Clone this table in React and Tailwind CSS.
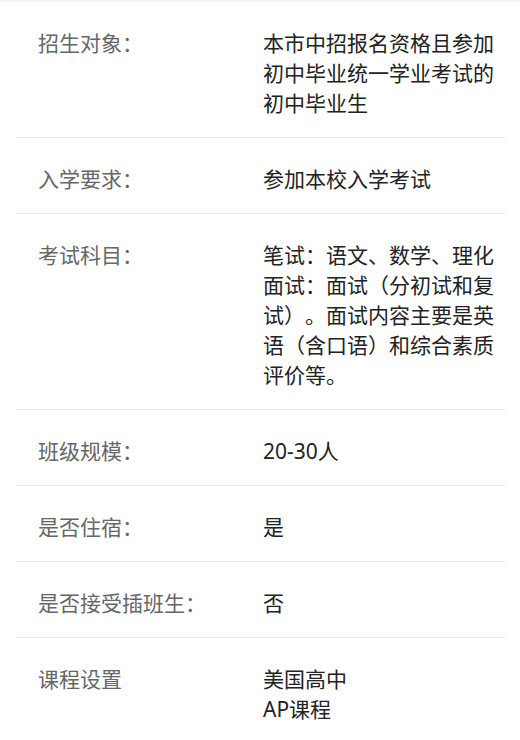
const rows = [
  { label: "招生对象：", value: ["本市中招报名资格且参加初中毕业统一学业考试的初中毕业生"] },
  { label: "入学要求：", value: ["参加本校入学考试"] },
  {
    label: "考试科目：",
    value: ["笔试：语文、数学、理化", "面试：面试（分初试和复试）。面试内容主要是英语（含口语）和综合素质评价等。"],
  },
  { label: "班级规模：", value: ["20-30人"] },
  { label: "是否住宿：", value: ["是"] },
  { label: "是否接受插班生：", value: ["否"] },
  { label: "课程设置", value: ["美国高中", "AP课程"] },
];

export default function App() {
  return (
    <div className="min-h-[740px] bg-white font-['Noto_Sans','Noto_Sans_CJK_SC',sans-serif] text-[21px] leading-[30px] [text-spacing-trim:space-all]">
      <div className="h-[2px] bg-[#f4f4f4]" />
      <div className="ml-4 mr-[14px]">
        {rows.map((row, i) => (
          <div
            key={row.label}
            className={`flex pt-[26px] pb-[19px] ${i < rows.length - 1 ? "border-b border-[#ececec]" : ""}`}
          >
            <div className="w-[247px] shrink-0 pl-[22px] text-[#666]">{row.label}</div>
            <div className="min-w-0 flex-1 text-[#222]">
              {row.value.map((line) => (
                <p key={line}>{line}</p>
              ))}
            </div>
          </div>
        ))}
      </div>
    </div>
  );
}
